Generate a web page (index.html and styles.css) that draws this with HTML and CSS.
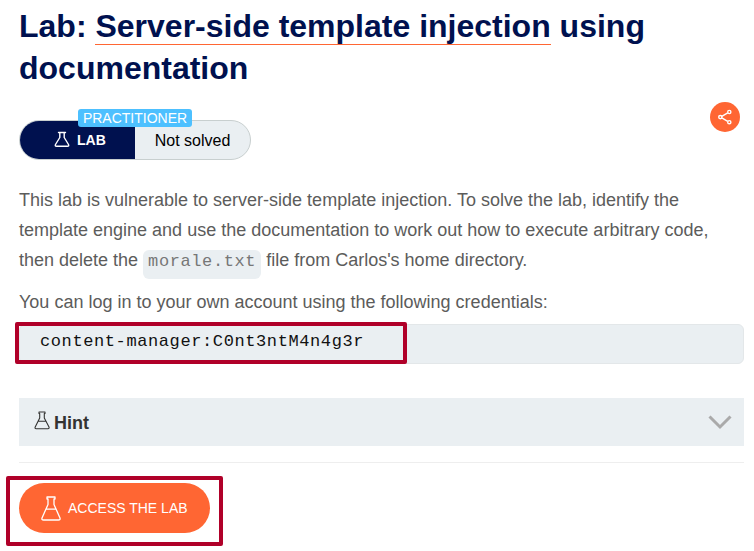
FILE: index.html
```html
<!DOCTYPE html>
<html lang="en">
<head>
<meta charset="utf-8">
<title>Lab: Server-side template injection using documentation</title>
<link rel="stylesheet" href="styles.css">
</head>
<body>
<main class="page">
  <h1 class="title">Lab: <a class="title-link">Server-side template injection</a> using documentation</h1>
  <div class="status-row">
    <div class="status">
      <span class="level">PRACTITIONER</span>
      <div class="status-lab">
        <svg class="flask-small" viewBox="0 0 16 17" fill="none" stroke="#fff" stroke-width="1.4" stroke-linejoin="round" stroke-linecap="round"><path d="M4.500 1.500h7M5.800 1.500v5L1.500 13.500q-.8 1.700 1 1.700h11q1.800 0 1-1.700L10.200 6.500v-5"/></svg>
        <span>LAB</span>
      </div>
      <div class="status-text">Not solved</div>
    </div>
    <div class="share">
      <svg width="30" height="30" viewBox="0 0 30 30" fill="none" stroke="#fff" stroke-width="1.4"><path d="M11.800 14.300l5.900-3.400M11.800 15.900l5.900 3.400"/><circle cx="10.300" cy="15.100" r="1.600"/><circle cx="19.300" cy="10" r="1.600"/><circle cx="19.300" cy="20.200" r="1.600"/></svg>
    </div>
  </div>
  <p class="text">This lab is vulnerable to server-side template injection. To solve the lab, identify the template engine and use the documentation to work out how to execute arbitrary code, then delete the <code class="inline-code">morale.txt</code> file from Carlos's home directory.</p>
  <p class="text login">You can log in to your own account using the following credentials:</p>
  <div class="credentials">
    <code>content-manager:C0nt3ntM4n4g3r</code>
    <span class="mark mark-credentials"></span>
  </div>
  <div class="hint">
    <svg class="flask-hint" viewBox="0 0 16 19" fill="none" stroke="#333332" stroke-width="1.1" stroke-linejoin="round" stroke-linecap="round"><path d="M5 1h6v1.500h-.7v4.500L15 16q.5 1.700-1 1.700H2.200Q.5 17.700 1.200 16L5.700 7V2.500H5zM4 10.300h8.200"/></svg>
    <span class="hint-label">Hint</span>
    <svg class="chevron" viewBox="0 0 24 16" fill="none" stroke="#aaa" stroke-width="3"><path d="M1.500 2.500L12 13L22.500 2.500"/></svg>
  </div>
  <hr class="rule">
  <div class="action">
    <a class="button">
      <svg class="flask-button" viewBox="0 0 20 25" fill="none" stroke="#fff" stroke-width="1.300" stroke-linejoin="round" stroke-linecap="round"><path d="M6 1h8V3h-1V8.500L19 22q.5 2-1.500 2h-15q-2 0-1.500-2L7 8.500V3H6zM5 13.200h10"/></svg>
      <span>ACCESS THE LAB</span>
    </a>
    <span class="mark mark-button"></span>
  </div>
</main>
</body>
</html>
```
FILE: styles.css
```css
* { box-sizing: border-box; }
body {
  margin: 0;
  background: #fff;
  font-family: "Liberation Sans", Arial, sans-serif;
}
svg { display: block; flex: none; }
.page { min-height: 551px; padding: 5px 10px 0 19px; }
.title {
  margin: 0;
  font-size: 32px;
  line-height: 42px;
  font-weight: bold;
  color: #00114f;
}
.title-link { border-bottom: 1px solid #ff6633; }
.status-row {
  display: flex;
  justify-content: space-between;
  padding: 13px 4px 0 0;
}
.status {
  position: relative;
  display: flex;
  width: 232px;
  height: 40px;
  margin-top: 18px;
  border: 1px solid #c8cfcf;
  border-radius: 20px;
  background: #eaeff2;
}
.status-lab {
  display: flex;
  align-items: center;
  gap: 7px;
  width: 115px;
  padding-left: 34px;
  border-radius: 19px 0 0 19px;
  background: #00114f;
  color: #fff;
  font-size: 14px;
  font-weight: bold;
}
.flask-small { width: 16px; height: 17px; margin-top: -2px; }
.status-text {
  flex: 1;
  text-align: center;
  font-size: 16px;
  line-height: 39px;
  color: #000;
}
.level {
  position: absolute;
  left: 58px;
  top: -12px;
  width: 114px;
  height: 18px;
  border-radius: 3px;
  background: #4dc0ff;
  color: #fff;
  font-size: 14px;
  line-height: 19px;
  text-align: center;
}
.share {
  width: 30px;
  height: 30px;
  border-radius: 50%;
  background: #ff6633;
}
.text {
  margin: 25px 0 0;
  font-size: 18px;
  line-height: 30px;
  color: #5c5c5b;
}
.login { margin-top: 12px; }
code {
  font-family: "Liberation Mono", monospace;
  font-size: 17px;
  letter-spacing: 0.6px;
  line-height: 1;
}
.inline-code {
  padding: 2px 5px 8px 5px;
  border-radius: 6px;
  background: #eaeff2;
  color: #777;
}
.credentials {
  position: relative;
  height: 40px;
  margin-top: 7px;
  padding-left: 20px;
  border: 1px solid #e3e7e9;
  border-radius: 6px;
  background: #eaeff2;
  line-height: 31px;
  color: #111;
}
.mark {
  position: absolute;
  border: 4px solid #b00029;
  border-radius: 2px;
}
.mark-credentials { left: -5px; top: -3px; width: 392px; height: 42px; }
.hint {
  display: flex;
  align-items: center;
  height: 48px;
  margin-top: 34px;
  padding: 0 12px 0 15px;
  background: #eaeff2;
  color: #333332;
  font-size: 18px;
  font-weight: bold;
}
.flask-hint { width: 16px; height: 19px; margin-top: -4px; }
.hint-label { margin: 2px auto 0 4px; }
.chevron { width: 24px; height: 16px; }
.rule { height: 1px; margin: 16px 0 20px; border: 0; background: #eee; }
.action { position: relative; width: 191px; }
.button {
  display: flex;
  align-items: center;
  gap: 7px;
  height: 50px;
  padding-left: 22px;
  border-radius: 25px;
  background: #ff6633;
  color: #fff;
  font-size: 14px;
  white-space: nowrap;
}
.flask-button { width: 20px; height: 25px; }
.mark-button { left: -13px; top: -7px; width: 217px; height: 70px; }
```
